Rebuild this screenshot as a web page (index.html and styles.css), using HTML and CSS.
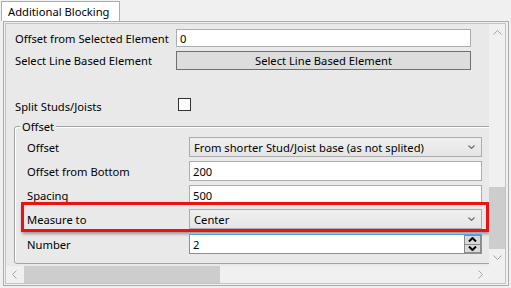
FILE: index.html
```html
<!DOCTYPE html>
<html>
<head>
<meta charset="utf-8">
<link rel="stylesheet" href="styles.css">
</head>
<body>
<div class="tabs">
  <div class="tab">Additional Blocking</div>
</div>
<div class="panel">
  <div class="viewer">
    <div class="content">
      <div class="row r1">
        <span class="lbl">Offset from Selected Element</span>
        <div class="input">0</div>
      </div>
      <div class="row r2">
        <span class="lbl">Select Line Based Element</span>
        <div class="button">Select Line Based Element</div>
      </div>
      <div class="row r3">
        <span class="lbl lbl-low">Split Studs/Joists</span>
        <div class="checkbox"></div>
      </div>
      <fieldset class="group">
        <legend>Offset</legend>
        <div class="grow">
          <span class="lbl">Offset</span>
          <div class="combo"><span>From shorter Stud/Joist base (as not splited)</span><svg class="chev" width="7" height="4" viewBox="0 0 7 4"><path d="M0.5 0.5 L3.5 3.5 L6.5 0.5" fill="none" stroke="#6a6a6a" stroke-width="1.1"/></svg></div>
        </div>
        <div class="grow">
          <span class="lbl">Offset from Bottom</span>
          <div class="input">200</div>
        </div>
        <div class="grow">
          <span class="lbl">Spacing</span>
          <div class="input">500</div>
        </div>
        <div class="grow highlighted">
          <span class="lbl">Measure to</span>
          <div class="combo"><span>Center</span><svg class="chev" width="7" height="4" viewBox="0 0 7 4"><path d="M0.5 0.5 L3.5 3.5 L6.5 0.5" fill="none" stroke="#6a6a6a" stroke-width="1.1"/></svg></div>
          <div class="mark"></div>
        </div>
        <div class="grow last">
          <span class="lbl">Number</span>
          <div class="input numeric">
            <span>2</span>
            <div class="spin">
              <div class="sbtn"><svg width="9" height="5" viewBox="0 0 9 5"><path d="M1 4.5 L4.5 1 L8 4.5" fill="none" stroke="#000" stroke-width="2"/></svg></div>
              <div class="sbtn"><svg width="9" height="5" viewBox="0 0 9 5"><path d="M1 0.5 L4.5 4 L8 0.5" fill="none" stroke="#000" stroke-width="2"/></svg></div>
            </div>
          </div>
        </div>
      </fieldset>
    </div>
    <div class="vscroll">
      <div class="sarrow"><svg width="9" height="5" viewBox="0 0 9 5"><path d="M0.5 4.5 L4.5 0.5 L8.5 4.5" fill="none" stroke="#a6a6a6"/></svg></div>
      <div class="vtrack"><div class="vthumb"></div></div>
      <div class="sarrow"><svg width="9" height="5" viewBox="0 0 9 5"><path d="M0.5 0.5 L4.5 4.5 L8.5 0.5" fill="none" stroke="#a6a6a6"/></svg></div>
    </div>
    <div class="hscroll">
      <div class="sarrow h"><svg width="5" height="9" viewBox="0 0 5 9"><path d="M4.5 0.5 L0.5 4.5 L4.5 8.5" fill="none" stroke="#a6a6a6"/></svg></div>
      <div class="htrack"><div class="hthumb"></div></div>
      <div class="sarrow h"><svg width="5" height="9" viewBox="0 0 5 9"><path d="M0.5 0.5 L4.5 4.5 L0.5 8.5" fill="none" stroke="#a6a6a6"/></svg></div>
    </div>
    <div class="corner"></div>
  </div>
</div>
</body>
</html>
```
FILE: styles.css
```css
* { box-sizing: border-box; }
body {
  margin: 0;
  width: 511px;
  height: 288px;
  overflow: hidden;
  background: #f0f0f0;
  font-family: "Noto Sans", "Open Sans", sans-serif;
  font-size: 11.2px;
  color: #000;
}
.tabs {
  display: flex;
  padding: 1px 0 0 1px;
  height: 21px;
}
.tab {
  width: 119px;
  height: 20px;
  background: #fff;
  border: 1px solid #acacac;
  border-bottom: none;
  padding-left: 6px;
  line-height: 19px;
}
.panel {
  margin-left: 3px;
  width: 506px;
  height: 265px;
  border: 1px solid #acacac;
  padding: 1px 2px 1px 1px;
}
.viewer {
  width: 100%;
  height: 100%;
  border: 1px solid #c4c4c4;
  display: grid;
  grid-template-columns: 1fr 16px;
  grid-template-rows: 1fr 17px;
}
.content {
  overflow: hidden;
  background: #e9e9e9;
  padding: 5px 0 0 9px;
  display: flex;
  flex-direction: column;
}
.row {
  display: grid;
  grid-template-columns: 161px 295px;
  align-items: center;
}
.r1 { height: 18px; }
.r2 { height: 19px; margin-top: 4px; }
.r3 { height: 19px; margin-top: 25px; }
.lbl { white-space: nowrap; }
.lbl-low { position: relative; top: 2px; }
.input {
  height: 100%;
  background: #fff;
  border: 1px solid #abadb3;
  padding-left: 3px;
  display: flex;
  align-items: center;
}
.button {
  height: 100%;
  background: #dddddd;
  border: 1px solid #707070;
  display: flex;
  align-items: center;
  justify-content: center;
}
.checkbox {
  width: 13px;
  height: 13px;
  margin-left: 2px;
  background: #fff;
  border: 1px solid #333;
}
.group {
  margin: 5px 0 0 -1px;
  padding: 3px 10px 9px 4px;
  border: 1px solid #a3a3a3;
  border-radius: 3px;
  box-shadow: inset 1px 1px 0 #fff;
  width: 482px;
  flex: none;
  display: flex;
  flex-direction: column;
  gap: 4px;
  min-width: 0;
}
.group legend {
  padding: 0 2px;
  margin-left: 1px;
  line-height: 15px;
  background: #e9e9e9;
}
.grow {
  display: grid;
  grid-template-columns: 162px 293px;
  align-items: center;
  height: 20px;
  margin-left: 8px;
  position: relative;
}
.grow.last { margin-top: 1px; }
.combo {
  height: 100%;
  border: 1px solid #acacac;
  background: linear-gradient(#f0f0f0, #e5e5e5);
  padding: 0 5px 0 4px;
  display: flex;
  align-items: center;
  justify-content: space-between;
}
.chev { margin-right: 1px; }
.numeric {
  border-color: #569de5;
  justify-content: space-between;
  padding-right: 0;
}
.spin {
  width: 17px;
  height: 100%;
  display: flex;
  flex-direction: column;
}
.sbtn {
  flex: 1;
  background: #dadada;
  border: 1px solid #8a8a8a;
  display: flex;
  align-items: center;
  justify-content: center;
}
.sbtn + .sbtn { border-top: none; }
.mark {
  position: absolute;
  left: -6px;
  right: -4px;
  top: -7px;
  bottom: -3px;
  border: 3px solid #ee1111;
  box-shadow: 1px 2px 3px rgba(0,0,0,0.35);
  pointer-events: none;
}
.vscroll {
  background: #f0f0f0;
  display: flex;
  flex-direction: column;
}
.sarrow {
  height: 17px;
  flex: none;
  display: flex;
  align-items: center;
  justify-content: center;
}
.sarrow.h { width: 17px; height: 100%; }
.vtrack {
  flex: 1;
  display: flex;
  flex-direction: column;
  justify-content: flex-end;
}
.vthumb {
  height: 62px;
  background: #cdcdcd;
}
.hscroll {
  background: #f0f0f0;
  display: flex;
}
.htrack {
  flex: 1;
  display: flex;
  padding-left: 1px;
}
.hthumb {
  width: 196px;
  background: #cdcdcd;
}
.corner { background: #f0f0f0; }
```
